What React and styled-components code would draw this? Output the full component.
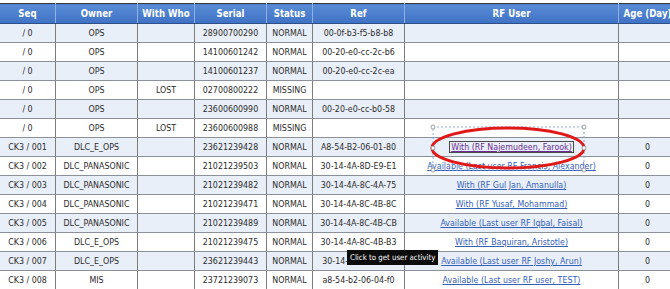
import React from "react";
import styled, { createGlobalStyle } from "styled-components";

const Global = createGlobalStyle`
  html, body {
    margin: 0;
    padding: 0;
    background: #ffffff;
  }
  body {
    font-family: "Liberation Sans Narrow", "DejaVu Sans Condensed", "Liberation Sans", sans-serif;
  }
`;

const Page = styled.div`
  position: relative;
  width: 670px;
  height: 289px;
  overflow: hidden;
  padding-top: 3px;
  box-sizing: border-box;
`;

const Table = styled.table`
  border-collapse: collapse;
  table-layout: fixed;
  width: 669px;
  font-size: 8.8px;
  color: #2b2b2b;
  border-top: 1px solid #3a3a3a;
`;

const HeadCell = styled.th`
  height: 19px;
  padding: 0;
  font-weight: bold;
  font-size: 9.6px;
  color: #ffffff;
  text-align: center;
  background: linear-gradient(#5a8cd6, #3f72c4);
  border-left: 1px solid #8fb0e0;
  border-bottom: 1px solid #2d4f8a;
  width: ${(p) => p.$w}px;
  &:first-child {
    border-left: none;
  }
  &:last-child {
    border-right: 1px solid #555;
  }
`;

const Row = styled.tr`
  background: ${(p) => (p.$alt ? "#e9eff9" : "#ffffff")};
`;

const Cell = styled.td`
  height: 18px;
  padding: 0;
  text-align: center;
  white-space: nowrap;
  overflow: hidden;
  border-left: 1px solid #7d7d7d;
  border-bottom: 1px solid #8c9099;
  &:first-child {
    border-left: none;
  }
  &:last-child {
    border-right: 1px solid #555;
  }
`;

const UserLink = styled.a`
  color: ${(p) => (p.$visited ? "#6b2c91" : "#3560b8")};
  text-decoration: underline;
  cursor: pointer;
  outline: ${(p) => (p.$focus ? "1px solid #4a4a4a" : "none")};
  outline-offset: 0;
  padding: 0 1px;
`;

const Annotation = styled.svg`
  position: absolute;
  left: 428px;
  top: 122px;
  pointer-events: none;
`;

const Tooltip = styled.div`
  position: absolute;
  left: 347px;
  top: 250px;
  padding: 3px 3px;
  background: #0c0c0c;
  color: #ffffff;
  font-size: 7.8px;
  white-space: nowrap;
`;

const cols = [
  ["Seq", 55],
  ["Owner", 81],
  ["With Who", 56],
  ["Serial", 71],
  ["Status", 45],
  ["Ref", 91],
  ["RF User", 213],
  ["Age (Day)", 57],
];

const rows = [
  ["/ 0", "OPS", "", "28900700290", "NORMAL", "00-0f-b3-f5-b8-b8", null, ""],
  ["/ 0", "OPS", "", "14100601242", "NORMAL", "00-20-e0-cc-2c-b6", null, ""],
  ["/ 0", "OPS", "", "14100601237", "NORMAL", "00-20-e0-cc-2c-ea", null, ""],
  ["/ 0", "OPS", "LOST", "02700800222", "MISSING", "", null, ""],
  ["/ 0", "OPS", "", "23600600990", "NORMAL", "00-20-e0-cc-b0-58", null, ""],
  ["/ 0", "OPS", "LOST", "23600600988", "MISSING", "", null, ""],
  ["CK3 / 001", "DLC_E_OPS", "", "23621239428", "NORMAL", "A8-54-B2-06-01-80", { text: "With (RF Najemudeen, Farook)", visited: true }, "0"],
  ["CK3 / 002", "DLC_PANASONIC", "", "21021239503", "NORMAL", "30-14-4A-8D-E9-E1", { text: "Available (Last user RF Francis, Alexander)" }, "0"],
  ["CK3 / 003", "DLC_PANASONIC", "", "21021239482", "NORMAL", "30-14-4A-8C-4A-75", { text: "With (RF Gul Jan, Amanulla)" }, "0"],
  ["CK3 / 004", "DLC_PANASONIC", "", "21021239471", "NORMAL", "30-14-4A-8C-4B-8C", { text: "With (RF Yusaf, Mohammad)" }, "0"],
  ["CK3 / 005", "DLC_PANASONIC", "", "21021239489", "NORMAL", "30-14-4A-8C-4B-CB", { text: "Available (Last user RF Iqbal, Faisal)" }, "0"],
  ["CK3 / 006", "DLC_E_OPS", "", "21021239475", "NORMAL", "30-14-4A-8C-4B-B3", { text: "With (RF Baquiran, Aristotle)" }, "0"],
  ["CK3 / 007", "DLC_E_OPS", "", "23621239443", "NORMAL", "30-14-4a-8d-et-10", { text: "Available (Last user RF Joshy, Arun)" }, "0"],
  ["CK3 / 008", "MIS", "", "23721239073", "NORMAL", "a8-54-b2-06-04-f0", { text: "Available (Last user RF user, TEST)" }, "0"],
];

const Handle = ({ cx, cy }) => (
  <circle cx={cx} cy={cy} r="2" fill="#ffffff" stroke="#8a8a8a" strokeWidth="0.8" />
);

export default function App() {
  return (
    <Page>
      <Global />
      <Table>
        <thead>
          <tr>
            {cols.map(([name, w]) => (
              <HeadCell key={name} $w={w}>
                {name}
              </HeadCell>
            ))}
          </tr>
        </thead>
        <tbody>
          {rows.map((r, i) => (
            <Row key={i} $alt={i % 2 === 0}>
              {r.map((v, j) => (
                <Cell key={j}>
                  {j === 6 && v ? (
                    <UserLink $visited={v.visited} $focus={v.visited}>
                      {v.text}
                    </UserLink>
                  ) : (
                    v
                  )}
                </Cell>
              ))}
            </Row>
          ))}
        </tbody>
      </Table>

      {/* selection frame + red ellipse drawn over the table */}
      <Annotation width="164" height="54" viewBox="0 0 164 54">
        <rect x="5" y="5" width="151" height="43" fill="none" stroke="#7f9cc7" strokeWidth="0.8" strokeDasharray="2 2" />
        <ellipse cx="80" cy="26" rx="76" ry="20" fill="none" stroke="#e01818" strokeWidth="3" />
        <Handle cx={5} cy={5} />
        <Handle cx={156} cy={5} />
        <Handle cx={5} cy={26} />
        <Handle cx={156} cy={26} />
        <Handle cx={5} cy={48} />
        <Handle cx={156} cy={48} />
      </Annotation>

      <Tooltip>Click to get user activity</Tooltip>
    </Page>
  );
}
